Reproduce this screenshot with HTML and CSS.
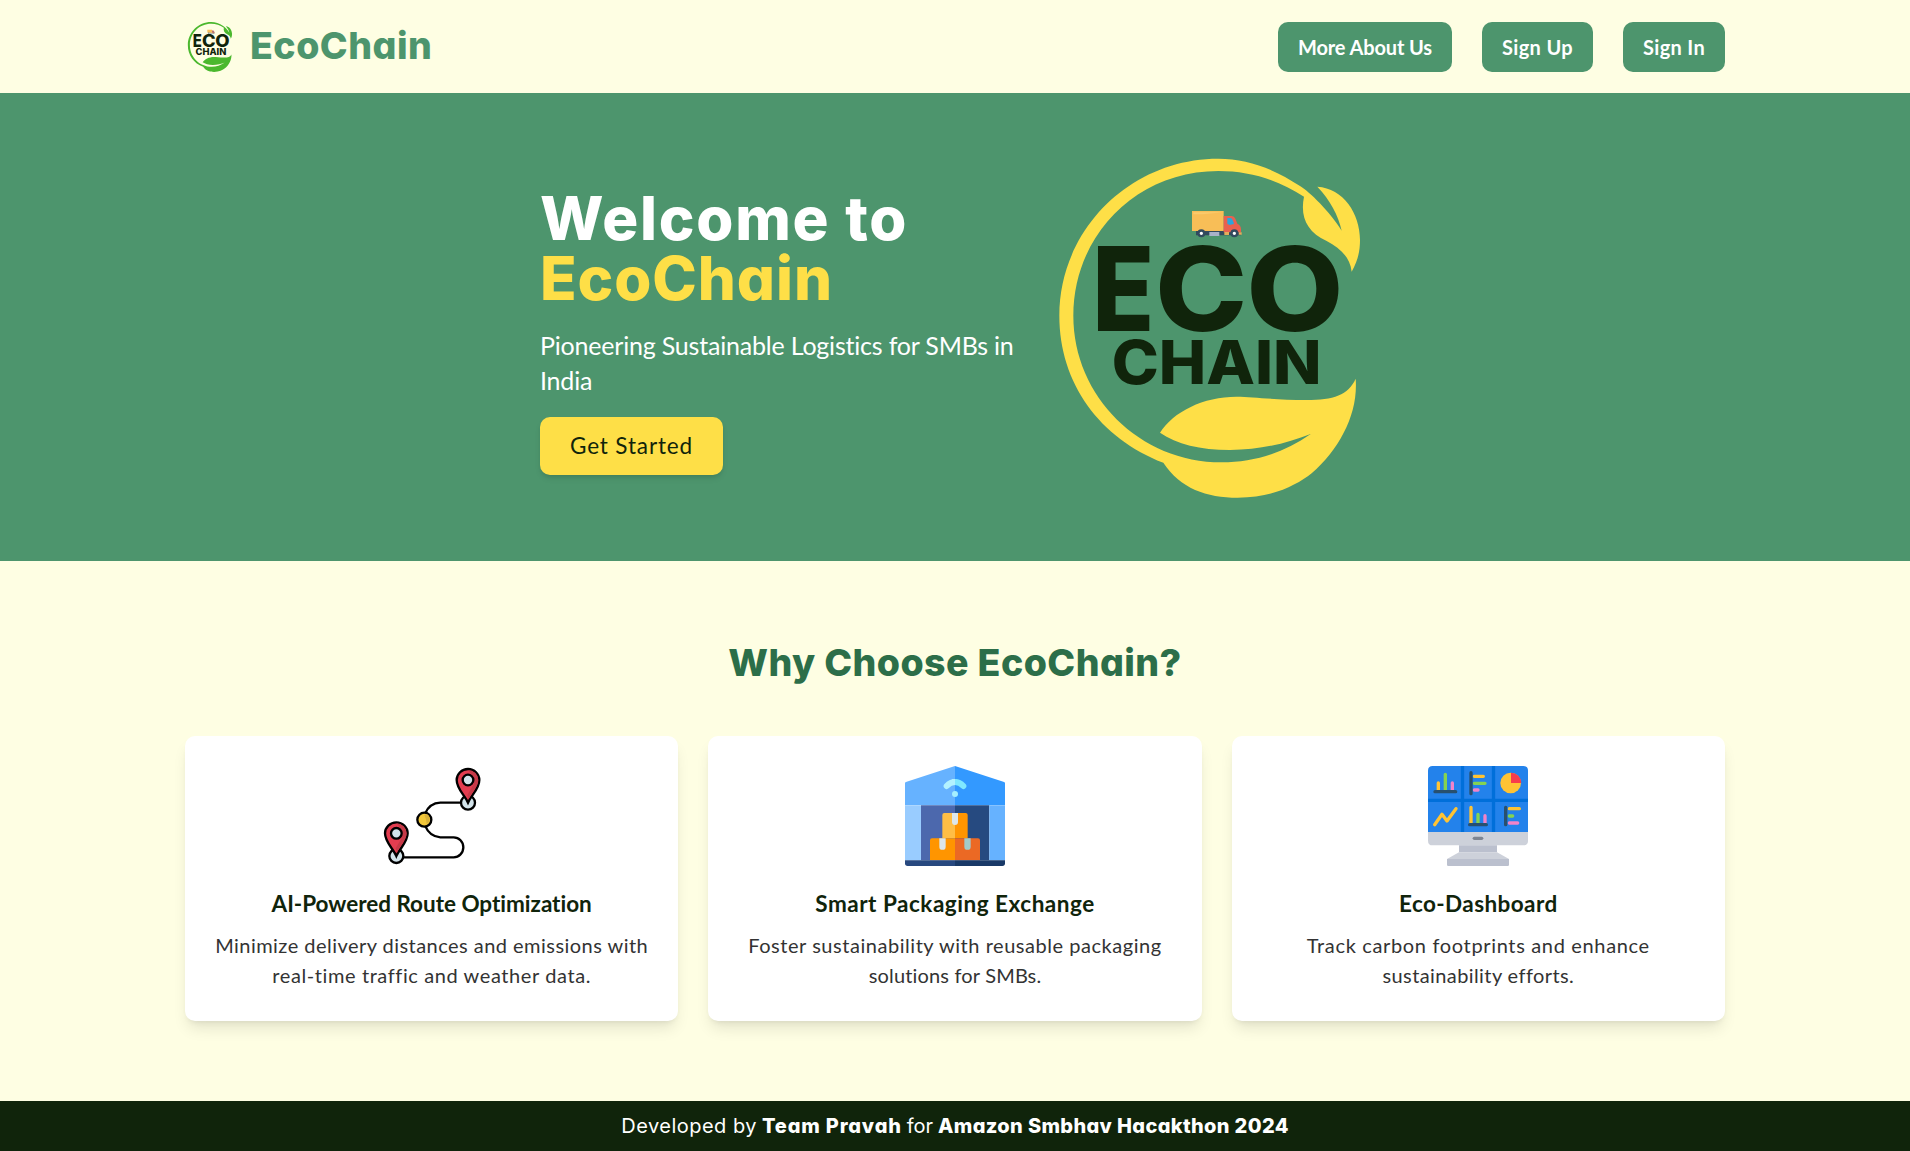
FILE: index.html
```html
<!DOCTYPE html>
<html lang="en">
<head>
<meta charset="utf-8">
<title>EcoChain</title>
<link rel="stylesheet" href="styles.css">
</head>
<body>
<svg class="sprite" aria-hidden="true">
  <symbol id="logo" viewBox="0 0 1020 1110">
    <path fill="currentColor" d="M905 272C870 215 808 155 780 138C700 85 620 56 535 56C270 56 58 270 58 527C58 730 180 895 370 968C420 1045 500 1073 593 1073C700 1073 770 1035 815 1000C900 925 955 820 947 716C925 765 880 780 800 780C700 780 640 770 590 770C490 770 400 815 360 878C410 912 480 930 570 930C660 930 740 910 812 882C730 940 640 967 545 967C300 967 100 770 100 527C100 285 290 93 535 93C630 93 715 120 792 170C780 230 800 275 860 303C900 325 930 350 935 395C955 360 960 330 960 300C960 220 910 145 832 140C870 180 895 225 905 272Z"/>
    <path fill="#324a5e" d="M468 272h134v14H468z"/>
    <path fill="#f8be57" d="M456 213h95v60h-95z"/>
    <path fill="#fbcb6c" d="M460 217h88l-60 6h-28z"/>
    <path fill="#e9604f" d="M551 228h24q8 0 11 8l6 15q11 5 11 16v10h-52z"/>
    <path fill="#2ba5dc" d="M562 234h10q6 1 10 18l-14 3-6-4z"/>
    <path fill="#a9b2c8" d="M508 276h30v12h-30z"/>
    <path fill="#e6ac58" d="M553 276h14v9h-14zM596 277h9v7h-9z"/>
    <g fill="#fff" stroke="#324a5e" stroke-width="7"><circle cx="484" cy="280" r="8.5"/><circle cx="583" cy="280" r="8.5"/></g>
    <g class="logo-text">
      <text y="572" font-size="349"><tspan x="157" textLength="186" lengthAdjust="spacingAndGlyphs">E</tspan><tspan x="345" textLength="277" lengthAdjust="spacingAndGlyphs">C</tspan><tspan x="619" textLength="292" lengthAdjust="spacingAndGlyphs">O</tspan></text>
      <text x="215" y="733" font-size="183" textLength="630" lengthAdjust="spacingAndGlyphs">CHAIN</text>
    </g>
  </symbol>
</svg>

<header class="header">
  <div class="container header-row">
    <a class="brand"><svg class="brand-logo"><use href="#logo"/></svg><span class="brand-name">EcoChain</span></a>
    <nav class="nav">
      <a class="nav-btn about">More About Us</a>
      <a class="nav-btn sign-up">Sign Up</a>
      <a class="nav-btn sign-in">Sign In</a>
    </nav>
  </div>
</header>

<section class="hero">
  <div class="hero-copy">
    <h1 class="hero-title">Welcome to<br><span class="accent">EcoChain</span></h1>
    <p class="hero-text">Pioneering Sustainable Logistics for SMBs in<br>India</p>
    <a class="cta">Get Started</a>
  </div>
  <svg class="hero-logo"><use href="#logo"/></svg>
</section>

<main class="features container">
  <h2 class="features-title">Why Choose EcoChain?</h2>
  <div class="cards">
    <article class="card">
      <svg class="icon" viewBox="35 33 300 300" fill="none" stroke="#000" stroke-width="7">
        <path d="M78 307H250A29 30 0 0 0 250 247H210Q178 245 164 212M164 176Q178 144 210 143H293"/>
        <circle cx="162" cy="194" r="21" fill="#f3c83a"/>
        <path d="M162 180l8-3q12 8 6 24l-7 6q-1-16-7-27z" fill="#d9b139" stroke="none"/>
        <g id="pin">
          <circle cx="78" cy="303" r="21" fill="#d3e4eb"/>
          <path d="M78 303C68 280 44 262 44 235a34 33 0 0 1 68 0C112 262 88 280 78 303z" fill="#e33d50"/>
          <path d="M78 205a31 30 0 0 1 31 30c0 20-20 36-29 58l-4-13 20-34V225z" fill="#c63a48" stroke="none"/>
          <circle cx="78" cy="235" r="16" fill="#d3e4eb"/>
        </g>
        <use href="#pin" x="215" y="-160"/>
      </svg>
      <h3 class="card-title route">AI-Powered Route Optimization</h3>
      <p class="card-text"><span class="t1">Minimize delivery distances and emissions with</span><br><span class="t2">real-time traffic and weather data.</span></p>
    </article>
    <article class="card">
      <svg class="icon" viewBox="45 33 300 300">
        <path fill="#66b2ff" d="M195 33V151H45V84q0-3 5-4z"/>
        <path fill="#3399ff" d="M195 33V151H345V84q0-3-5-4z"/>
        <path fill="#99ccff" d="M45 151h48v165H45z"/>
        <path fill="#4c68ad" d="M93 151h102v165H93z"/>
        <path fill="#264a80" d="M195 151h103v165H195z"/>
        <path fill="#66b2ff" d="M298 151h47v165h-47z"/>
        <path fill="#ffbe45" d="M157 250v-70q0-6 6-6h32v76z"/>
        <path fill="#ff9500" d="M195 174h32q6 0 6 6v70h-38zM120 316v-60q0-6 6-6h69v66z"/>
        <path fill="#eb6924" d="M195 250h69q6 0 6 6v60h-75z"/>
        <path fill="#dde7e9" d="M186 174h18v27a9 9 0 0 1-18 0zM148 250h19v25a9 9 0 0 1-19 0z"/>
        <path fill="#a3cbca" d="M223 250h19v25a9 9 0 0 1-19 0z"/>
        <path fill="#27487f" d="M45 316h150v17H53q-8 0-8-8z"/>
        <path fill="#193967" d="M195 316h150v9q0 8-8 8H195z"/>
        <path fill="none" stroke="#b3f2ff" stroke-width="18" stroke-linecap="round" d="M170 93q11-12 25-12"/>
        <path fill="none" stroke="#80e8ff" stroke-width="18" stroke-linecap="round" d="M220 93q-11-12-25-12"/>
        <path fill="#b3f2ff" d="M186 72h9v18h-9z"/>
        <circle cx="195" cy="117" r="9" fill="#a5efff"/>
      </svg>
      <h3 class="card-title packaging">Smart Packaging Exchange</h3>
      <p class="card-text"><span class="t3">Foster sustainability with reusable packaging</span><br><span class="t4">solutions for SMBs.</span></p>
    </article>
    <article class="card">
      <svg class="icon" viewBox="54 33 300 300" fill="none" stroke-width="10" stroke-linecap="round">
        <path fill="#2382eb" d="M54 231V47q0-14 14-14h272q14 0 14 14v184z"/>
        <path stroke="#006fda" stroke-linecap="butt" d="M54 136H354M157.500 33V231M250.500 33V231"/>
        <path fill="#cdd1da" d="M54 231h300v26q0 14-14 14H68q-14 0-14-14z"/>
        <path fill="#bbc0ce" d="M147 271h114v21H147z"/>
        <path fill="#cdd1da" d="M147 292h114l36 20H111z"/>
        <path fill="#bbc0ce" d="M111 312h186v17q0 4-4 4H115q-4 0-4-4z"/>
        <path stroke="#7d8592" d="M193 250h22"/>
        <path stroke="#ffc334" d="M85 84v22M193 64h27M183 157v48M298 161h30M74 209l22-31 15 20 27-37" stroke-linejoin="round"/>
        <path stroke="#84d352" d="M106 58v48M193 85h32M204 178v27M298 183h10"/>
        <path stroke="#f283c9" d="M127 84v22M193 105h11M225 182v23M298 204h25"/>
        <path stroke="#28506f" d="M75 110h62M183 53v63M179 209h50M287 157v52"/>
        <circle cx="302" cy="84" r="31" fill="#ffc334"/>
        <path fill="#f83c4c" d="M303 84V53a31 31 0 0 1 31 31z"/>
      </svg>
      <h3 class="card-title dashboard">Eco-Dashboard</h3>
      <p class="card-text"><span class="t5">Track carbon footprints and enhance</span><br><span class="t6">sustainability efforts.</span></p>
    </article>
  </div>
</main>

<footer class="footer"><span class="by">Developed by</span> <b class="team">Team Pravah</b> <span>for</span> <b class="event">Amazon Smbhav Hacakthon 2024</b></footer>
</body>
</html>
```
FILE: styles.css
```css
* { box-sizing: border-box; margin: 0; padding: 0; }
body {
  background: #fefee3;
  color: #10240b;
  font: 400 20px/30px Lato, sans-serif;
}
.sprite { position: absolute; width: 0; height: 0; }
.container { width: 1540px; margin: 0 auto; }
.logo-text { font-family: Inter, sans-serif; font-weight: 800; fill: #10240b; }

.header { height: 93px; }
.header-row { height: 93px; display: flex; align-items: center; justify-content: space-between; }
.brand { display: flex; align-items: center; gap: 15px; color: #4bb82e; }
.brand-logo { width: 50px; height: 55px; }
.brand-name {
  font: 800 37.5px/45px Inter, sans-serif;
  font-feature-settings: "cv11";
  letter-spacing: .013em;
  padding-bottom: 2px;
  color: #4d956d;
}
.nav { display: flex; gap: 30px; padding-top: 1px; }
.nav-btn {
  height: 50px;
  padding: 10px 0 10px 20px;
  border-radius: 10px;
  background: #4d956d;
  color: #fff;
  font-weight: 700;
  white-space: nowrap;
}
.about { width: 174px; letter-spacing: -.0063em; }
.sign-up { width: 111px; letter-spacing: .0172em; }
.sign-in { width: 102px; letter-spacing: .0158em; }

.hero {
  height: 468px;
  padding: 47px 0 0 540px;
  display: flex;
  background: #4d956d;
  color: #fff;
}
.hero-copy { width: 500px; padding-top: 48px; }
.hero-title {
  font: 800 60px/60px Inter, sans-serif;
  font-feature-settings: "cv11";
  letter-spacing: .029em;
  margin-bottom: 20px;
}
.accent { letter-spacing: .0154em; color: #fedf47; }
.hero-text { font-size: 25px; line-height: 35px; letter-spacing: -.008em; white-space: nowrap; }
.cta {
  display: block;
  width: 183px;
  height: 58px;
  margin-top: 19px;
  padding-left: 30px;
  border-radius: 10px;
  background: #fedf47;
  box-shadow: 0 4px 6px -1px rgba(0, 0, 0, .1), 0 2px 4px -2px rgba(0, 0, 0, .1);
  color: #10240b;
  font-size: 22.5px;
  line-height: 57px;
  letter-spacing: .0381em;
}
.hero-logo { width: 340px; height: 370px; color: #fedf47; }

.features { padding: 79px 0 80px; }
.features-title {
  font: 800 37.5px/45px Inter, sans-serif;
  font-feature-settings: "cv11";
  letter-spacing: .0115em;
  margin-bottom: 51px;
  text-align: center;
  color: #2c6e49;
}
.cards { display: grid; grid-template-columns: repeat(3, 1fr); gap: 30px; }
.card {
  height: 285px;
  padding: 30px 0;
  border-radius: 10px;
  background: #fff;
  box-shadow: 0 10px 15px -3px rgba(0, 0, 0, .1), 0 4px 6px -4px rgba(0, 0, 0, .1);
  text-align: center;
}
.icon { display: block; width: 100px; height: 100px; margin: 0 auto 20px; }
.card-title { font-size: 22.5px; line-height: 35px; margin-bottom: 9px; }
.route { letter-spacing: -.0007em; }
.packaging { letter-spacing: .0231em; }
.dashboard { letter-spacing: .018em; }
.card-text { color: #333; white-space: nowrap; }
.t1 { letter-spacing: .0231em; }
.t2 { letter-spacing: .0298em; }
.t3 { letter-spacing: .0271em; }
.t4 { letter-spacing: .0084em; }
.t5 { letter-spacing: .0328em; }
.t6 { letter-spacing: .0201em; }

.footer {
  height: 50px;
  display: flex;
  justify-content: center;
  gap: 5px;
  background: #10240b;
  color: #fff;
  font: 400 20px/50px Inter, sans-serif;
  font-feature-settings: "cv11";
}
.footer b { font-weight: 800; }
.by { letter-spacing: .0245em; }
.team { letter-spacing: .041em; }
.event { letter-spacing: .0175em; }
```
